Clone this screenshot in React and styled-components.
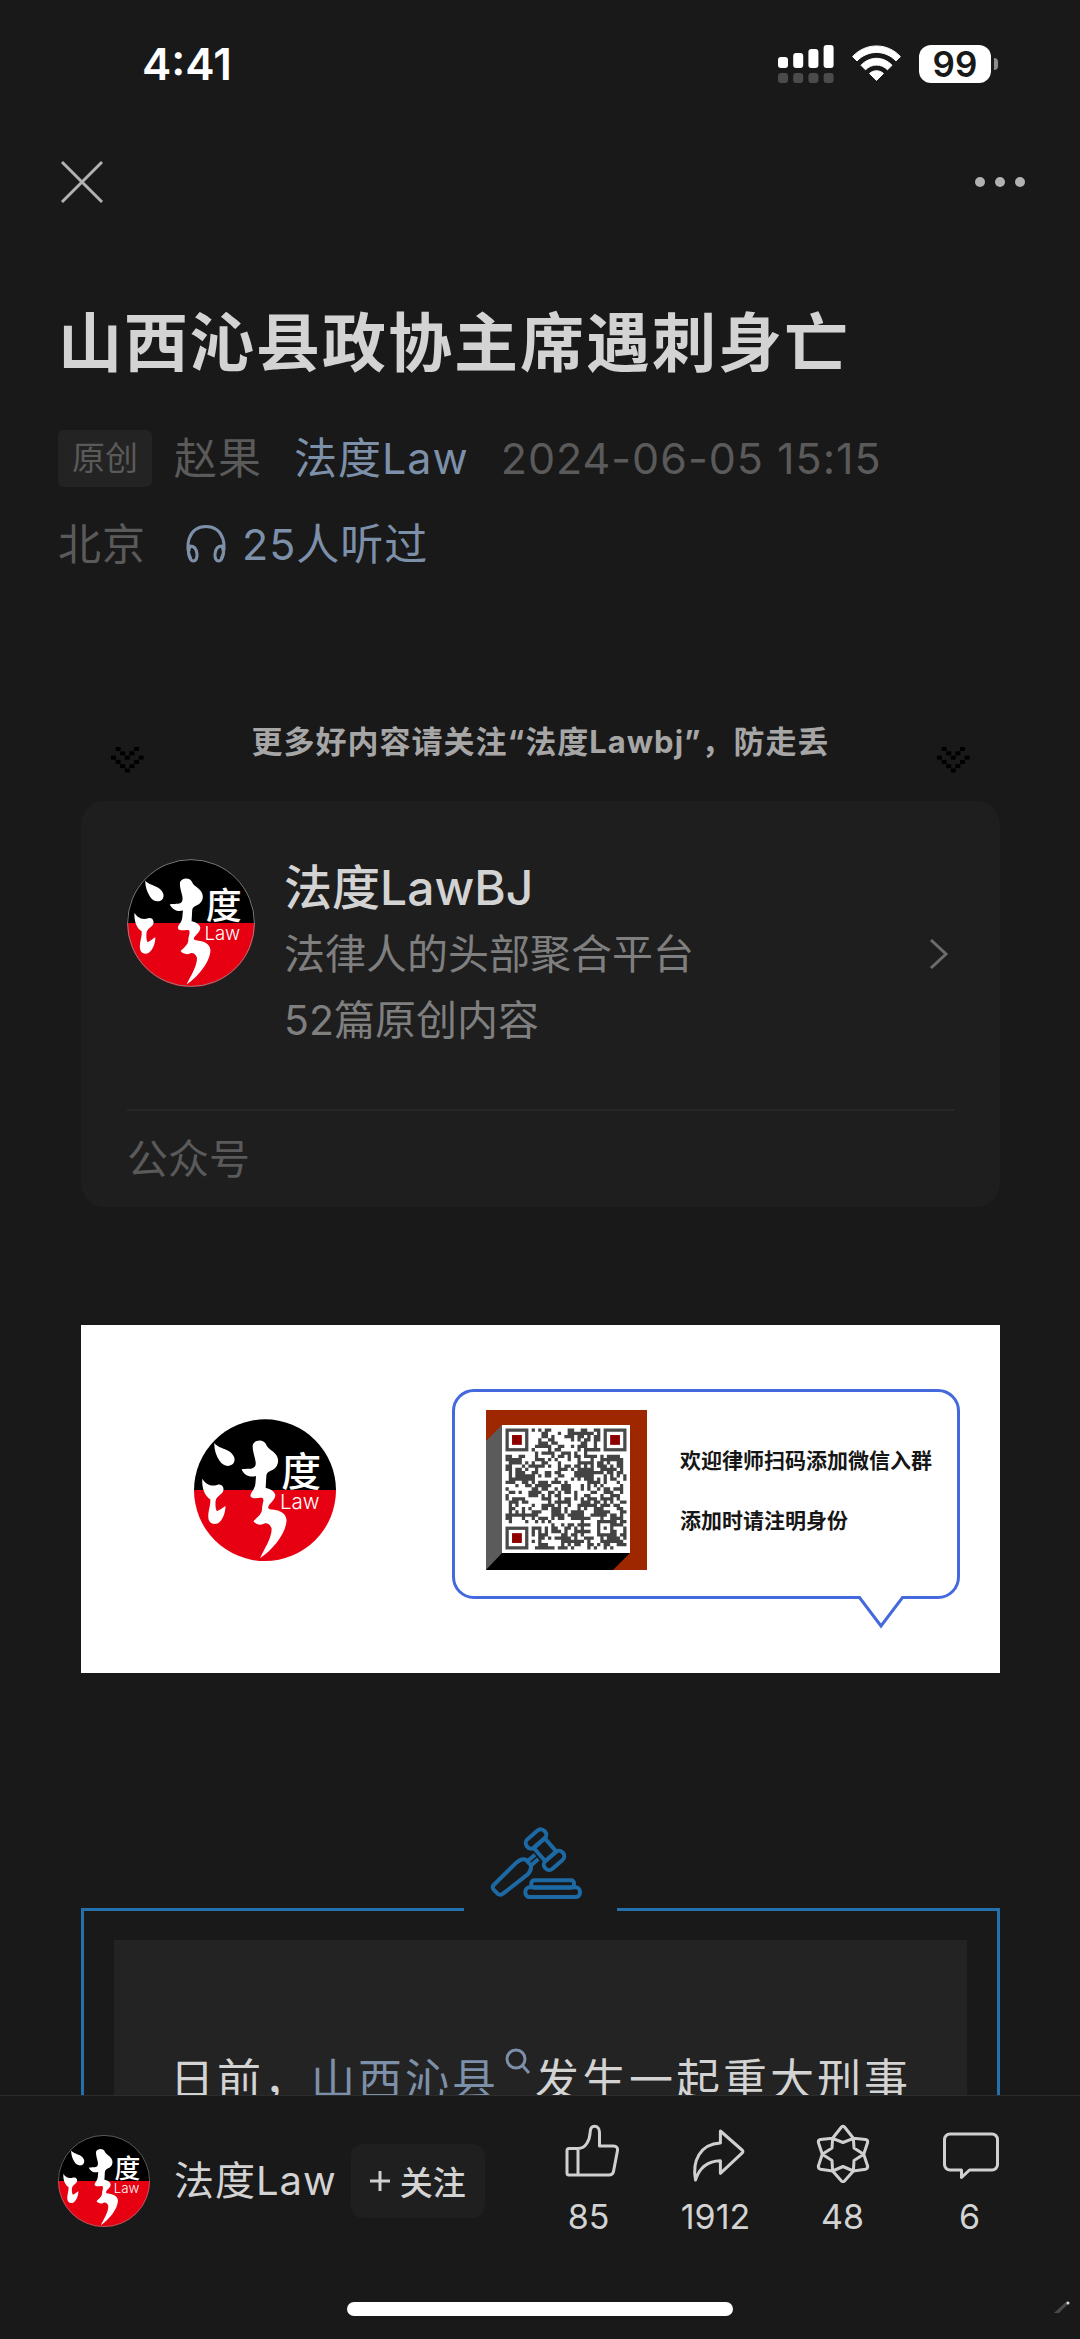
import React from "react";
import styled, { createGlobalStyle } from "styled-components";

const GlobalStyle = createGlobalStyle`
  * {
    box-sizing: border-box;
  }

  body {
    margin: 0;
    background: #191919;
    font-family: Inter, "Noto Sans CJK SC", sans-serif;
  }

  button {
    border: 0;
    padding: 0;
    background: none;
    color: inherit;
    font: inherit;
  }

  a {
    color: inherit;
    text-decoration: none;
  }

  svg {
    display: block;
    flex: none;
  }
`;

const Screen = styled.div`
  display: flex;
  flex-direction: column;
  height: 100vh;
  background: #191919;
  color: #d3d3d3;
`;

/* status bar */

const StatusBar = styled.header`
  display: flex;
  align-items: center;
  justify-content: space-between;
  height: 128px;
  padding: 0 82px 0 142px;
  color: #fff;
`;

const Clock = styled.time`
  font-size: 44px;
  font-weight: 600;
  line-height: 52px;
`;

const StatusIcons = styled.div`
  display: flex;
  align-items: center;
  gap: 18px;
`;

const Battery = styled.div`
  display: flex;
  align-items: center;
  gap: 3px;

  &::after {
    content: "";
    width: 4px;
    height: 12px;
    border-radius: 0 4px 4px 0;
    background: #8c8c8c;
  }
`;

const BatteryLevel = styled.span`
  width: 72px;
  border-radius: 12px;
  background: #fff;
  color: #191919;
  font-size: 35px;
  font-weight: 600;
  line-height: 38px;
  text-align: center;
`;

const NavBar = styled.nav`
  display: flex;
  align-items: center;
  justify-content: space-between;
  height: 108px;
  padding: 0 52px 0 58px;
  color: #b2b2b2;
`;

/* article */

const Scroller = styled.main`
  flex: 1;
  min-height: 0;
  overflow: hidden auto;
  scrollbar-width: none;
`;

const Heading = styled.div`
  padding: 65px 58px 0;
`;

const Title = styled.h1`
  margin: 0 0 30px;
  font-size: 64px;
  font-weight: 700;
  line-height: 84px;
  letter-spacing: 2px;
`;

const Meta = styled.div`
  display: flex;
  flex-wrap: wrap;
  align-items: center;
  max-width: 920px;
  color: #5a5a5a;
  font-size: 43px;
  line-height: 86px;
  letter-spacing: 1px;
  column-gap: 32px;
`;

const Author = styled.span`
  display: flex;
  align-items: center;
  gap: 22px;
`;

const Tag = styled.span`
  padding: 0 14px;
  border-radius: 6px;
  background: #232323;
  font-size: 33px;
  line-height: 57px;
  letter-spacing: 0;
`;

const MetaLink = styled.a`
  display: flex;
  align-items: center;
  gap: 16px;
  color: #7d90a9;
`;

const Place = styled.span`
  margin-right: 8px;
`;

const Content = styled.div`
  padding: 132px 80px 0 81px;
`;

const Notice = styled.div`
  display: flex;
  justify-content: space-between;
  height: 82px;
  padding: 0 30px;

  svg {
    margin-top: 28px;
  }
`;

const NoticeText = styled.strong`
  color: #a6a6a6;
  font-size: 31px;
  font-weight: 700;
  line-height: 46px;
  letter-spacing: 1px;
`;

const ProfileCard = styled.section`
  padding: 54px 46px 0;
  border-radius: 24px;
  background: #1e1e1e;
`;

const ProfileLink = styled.a`
  display: flex;
  align-items: center;
  padding-bottom: 56px;
  border-bottom: 2px solid #282828;
`;

const ProfileAvatar = styled.div`
  align-self: flex-start;
  padding-top: 4px;
`;

const ProfileText = styled.div`
  flex: 1;
  margin-left: 29px;
  color: #7f7f7f;
  font-size: 41px;
  line-height: 66px;
`;

const ProfileName = styled.div`
  color: #d3d3d3;
  font-size: 48px;
  font-weight: 500;
`;

const ProfileKind = styled.div`
  color: #5a5a5a;
  font-size: 41px;
  line-height: 96px;
`;

const Banner = styled.section`
  display: flex;
  align-items: flex-start;
  justify-content: space-between;
  margin-top: 118px;
  height: 348px;
  padding: 64px 40px 0 113px;
  background: #fff;
`;

const BannerLogo = styled.div`
  padding-top: 30px;
`;

const Bubble = styled.div`
  position: relative;
  display: flex;
  width: 508px;
  height: 210px;
  padding: 18px 0 0 31px;
  border: 3px solid #4468de;
  border-radius: 22px;
`;

const BubbleTail = styled.svg`
  position: absolute;
  right: 52px;
  bottom: -33px;
`;

const BubbleText = styled.p`
  margin: 21px 0 0 33px;
  color: #161616;
  font-size: 21px;
  font-weight: 700;
  line-height: 60px;
`;

const FrameTop = styled.div`
  display: flex;
  align-items: flex-end;
  margin-top: 148px;
`;

const FrameLine = styled.span`
  flex: 1;
  height: 3px;
  background: #2470ad;
`;

const GavelSlot = styled.span`
  display: flex;
  justify-content: center;
  width: 153px;
`;

const Frame = styled.div`
  padding: 29px 30px 0;
  border: solid #2470ad;
  border-width: 0 3px;
`;

const Passage = styled.p`
  margin: 0;
  padding: 102px 48px 104px 56px;
  background: #232323;
  font-size: 44px;
  line-height: 76px;
  letter-spacing: 3px;
`;

const TopicLink = styled.a`
  color: #7d90a9;

  svg {
    display: inline-block;
    margin: 0 4px 22px 6px;
    vertical-align: baseline;
  }
`;

/* bottom bar */

const BottomBar = styled.footer`
  position: relative;
  border-top: 1px solid #2c2c2c;
`;

const BarRow = styled.div`
  display: flex;
  align-items: center;
  padding: 22px 47px 0 58px;
`;

const AccountName = styled.a`
  margin: 0 14px 0 24px;
  font-size: 40px;
  line-height: 56px;
  letter-spacing: 1px;
`;

const FollowButton = styled.button`
  display: flex;
  align-items: center;
  justify-content: center;
  gap: 10px;
  width: 134px;
  height: 74px;
  border-radius: 12px;
  background: #1f1f1f;
  font-size: 33px;
  font-weight: 500;
`;

const Actions = styled.div`
  display: flex;
  margin-left: auto;
`;

const ActionButton = styled.button`
  display: flex;
  flex-direction: column;
  align-items: center;
  gap: 12px;
  width: 127px;
  padding: 5px 0;
  font-size: 34px;
  line-height: 44px;
`;

const HomeIndicator = styled.div`
  width: 386px;
  height: 14px;
  margin: 58px auto 23px;
  border-radius: 7px;
  background: #fff;
`;

const Glint = styled.svg`
  position: absolute;
  right: 10px;
  bottom: 24px;
`;

/* drawings */

const Logo = ({ size, ring }) => (
  <svg width={size} height={size} viewBox="341 326 428 428" role="img" aria-label="法度Law">
    <path d="M341 541a214 214 0 0 1 428 0Z" fill="#000" />
    <path d="M341 540a214 214 0 0 0 428 0Z" fill="#e60012" />
    {ring && <circle cx="555" cy="540" r="212" fill="none" stroke="#8a8a8a" strokeWidth="3" />}
    <g fill="#fff">
      <path d="M402 398C412 412 434 414 448 424C464 436 468 452 458 462C446 472 428 468 418 452C408 436 402 420 402 398Z" />
      <path d="M366 506C374 520 390 532 412 524C426 520 434 534 428 546C420 556 408 560 406 574C405 586 406 598 410 604C420 600 428 592 436 588C436 606 428 632 412 641C396 646 384 638 384 620C384 600 392 584 390 568C374 558 364 536 366 506Z" />
      <path d="M518 404C524 388 550 386 558 402C564 418 580 420 590 436C600 454 592 470 580 478C568 484 560 486 559 498L557 534C568 536 582 542 586 554C588 568 570 580 566 588C560 598 572 598 586 600C608 604 620 616 620 632C618 672 578 720 540 746C554 716 576 684 575 656C570 642 560 638 552 642C540 648 526 642 520 634C532 622 546 612 546 598C546 582 554 572 548 564C538 560 522 570 512 560C508 550 524 540 526 522L528 498C514 502 496 500 484 478C500 474 514 480 524 470C534 456 516 432 518 404Z" />
      <text x="604" y="527" fontSize="120" fontWeight="500">度</text>
      <text x="600" y="597" fontSize="62" fontWeight="300">Law</text>
    </g>
  </svg>
);

const Signal = () => (
  <svg width="56" height="38" viewBox="0 0 56 38">
    {[11, 15, 19, 23].map((h, i) => (
      <g key={h}>
        <rect x={i * 15.2} y={23 - h} width="10" height={h} rx="3" fill="#fff" />
        <rect x={i * 15.2} y="28" width="10" height="10" rx="3" fill="#4b4b4b" />
      </g>
    ))}
  </svg>
);

const Wifi = () => (
  <svg width="49" height="38" viewBox="0 0 49 38" fill="#fff" stroke="#fff" strokeLinejoin="round">
    <path d="M0.600 11.600C13.500-2.600 35.500-2.600 48.400 11.600L44 16C33.400 4.600 15.600 4.600 5 16Z" />
    <path d="M9 20.300C17.500 11 31.500 11 40 20.300L35.500 24.800C29.500 18.500 19.500 18.500 13.500 24.800Z" />
    <path d="M17.500 28.500C21.500 24.800 27.500 24.800 31.500 28.500L24.500 35.500Z" />
  </svg>
);

const DownMark = () => {
  const rows = [[1, 5], [2, 4], [0, 3, 6], [1, 5], [2, 4], [3]];
  return (
    <svg width="33" height="26" viewBox="0 0 33 26">
      {rows.map((cols, y) =>
        cols.map((x) => (
          <rect key={`${x}-${y}`} x={x * 4.6} y={y * 4.3} width="5" height="4" fill="#000" />
        ))
      )}
    </svg>
  );
};

const QR_SIZE = 37;

const inFinder = (x, y) =>
  (x < 8 && y < 8) || (x > QR_SIZE - 9 && y < 8) || (x < 8 && y > QR_SIZE - 9);

const inAlign = (x, y) => Math.abs(x - 30) < 3 && Math.abs(y - 30) < 3;

const qrPath = () => {
  let seed = 20240605;
  let d = "";
  for (let y = 0; y < QR_SIZE; y++) {
    for (let x = 0; x < QR_SIZE; x++) {
      seed = (seed * 1103515245 + 12345) % 2147483648;
      if (inFinder(x, y)) continue;
      const ring = Math.max(Math.abs(x - 30), Math.abs(y - 30));
      const on = inAlign(x, y) ? ring !== 1 : seed / 2147483648 < 0.5;
      if (on) d += `M${x} ${y}h1v1h-1z`;
    }
  }
  return d;
};

const QR_PATH = qrPath();

const QrCode = () => (
  <svg width="161" height="160" viewBox="0 0 161 160" role="img" aria-label="微信群二维码">
    <rect width="161" height="160" fill="#9f2700" />
    <path d="M0 31L16 15V144L0 160Z" fill="#5b5b5b" />
    <path d="M0 160L16 143H144L127 160Z" fill="#000" />
    <rect x="16" y="15" width="128" height="128" fill="#fff" />
    <g transform="translate(19.500 18.500) scale(3.27)">
      <path d={QR_PATH} fill="#444" />
      {[[0, 0], [30, 0], [0, 30]].map(([x, y]) => (
        <g key={`${x}-${y}`}>
          <rect x={x + 0.5} y={y + 0.5} width="6" height="6" fill="none" stroke="#4a4a4a" />
          <rect x={x + 2} y={y + 2} width="3" height="3" fill="#8e0000" />
        </g>
      ))}
    </g>
  </svg>
);

const Gavel = () => (
  <svg width="120" height="90" viewBox="0 0 360 270" fill="none" stroke="#1d69a3" strokeWidth="12">
    <g transform="rotate(-41 165 54)">
      <rect x="130" y="38" width="70" height="32" rx="15" />
    </g>
    <g transform="rotate(-41 192 86)">
      <rect x="170" y="59" width="44" height="54" />
    </g>
    <g transform="rotate(-41 219 118)">
      <rect x="184" y="102" width="70" height="32" rx="15" />
    </g>
    <path d="M139 121L162 101M149 134L172 114" />
    <path d="M38 192L106 125C116 116 128 114 134 116L149 132C152 142 148 152 140 160L66 218C58 224 52 222 46 214L38 206C34 200 34 196 38 192Z" strokeLinejoin="round" />
    <rect x="151" y="178" width="128" height="22" rx="9" />
    <rect x="133" y="199" width="164" height="29" rx="13" />
  </svg>
);

const icons = {
  like: (
    <path d="M19 25.500H10a2 2 0 0 0-2 2V50a2 2 0 0 0 2 2H50c2.500 0 4-1 4.500-3.500L58.400 28c.6-3-.8-5-4-5H40.500V9.500C40.500 5.500 38.500 3.300 35.500 3.300S31.400 5 31.200 9C30.800 17 27 25.500 19 25.500ZM19 25.500V52" />
  ),
  share: (
    <path d="M34.400 8L56 27q1.800 1.600 0 3.200L34.400 50.300V37.800C24 38 14 43 9.500 57C6 38 14 21 34.400 20Z" />
  ),
  flower: (
    <>
      <path d="M28.500 4Q30 2.500 31.500 4L40.400 15.300L52.500 16.500Q55 17 54.600 19.500L50.700 31.300L54.600 43Q55 45.500 52.500 46.200L40.400 48L31.500 58Q30 59.500 28.500 58L19.600 48L7.500 46.200Q5 45.500 5.400 43L9.300 31.300L5.400 19.500Q5 17 7.500 16.500L19.600 15.300Z" />
      <path d="M19.600 15.300L30 19.500L40.400 15.300L41 25L50.700 31.300L41 37.500L40.400 48L30 43.500L19.600 48L19 37.500L9.300 31.300L19 25Z" />
    </>
  ),
  comment: (
    <path d="M10 11H52a5.500 5.500 0 0 1 5.500 5.500V41.500a5.500 5.500 0 0 1-5.500 5.500H29.500L21.500 54.500V47H10a5.500 5.500 0 0 1-5.500-5.500V16.500A5.500 5.500 0 0 1 10 11Z" />
  ),
};

const Action = ({ icon, label, count }) => (
  <ActionButton type="button" aria-label={`${label} ${count}`}>
    <svg width="60" height="60" viewBox="0 0 60 60" fill="none" stroke="#d0d0d0" strokeWidth="3" strokeLinejoin="round">
      {icons[icon]}
    </svg>
    {count}
  </ActionButton>
);

export default function App() {
  return (
    <>
      <GlobalStyle />
      <Screen>
        <StatusBar>
          <Clock>4:41</Clock>
          <StatusIcons>
            <Signal />
            <Wifi />
            <Battery>
              <BatteryLevel>99</BatteryLevel>
            </Battery>
          </StatusIcons>
        </StatusBar>

        <NavBar>
          <button type="button" aria-label="关闭">
            <svg width="48" height="48" viewBox="0 0 48 48" stroke="#b2b2b2" strokeWidth="3">
              <path d="M4 4L44 44M44 4L4 44" />
            </svg>
          </button>
          <button type="button" aria-label="更多">
            <svg width="56" height="12" viewBox="0 0 56 12" fill="#b2b2b2">
              <circle cx="8" cy="6" r="5" />
              <circle cx="28" cy="6" r="5" />
              <circle cx="48" cy="6" r="5" />
            </svg>
          </button>
        </NavBar>

        <Scroller>
          <Heading>
            <Title>山西沁县政协主席遇刺身亡</Title>
            <Meta>
              <Author>
                <Tag>原创</Tag>
                赵果
              </Author>
              <MetaLink href="#account">法度Law</MetaLink>
              <time>2024-06-05 15:15</time>
              <Place>北京</Place>
              <MetaLink href="#listen">
                <svg width="40" height="40" viewBox="0 0 40 40" fill="none" stroke="#7d90a9" strokeWidth="3">
                  <path d="M5 35C1 29 1.500 20 3 15C6 6 12 2.500 20 2.500S34 6 37 15C38.500 20 39 29 35 35" />
                  <path d="M4 22C8 22 10.500 25 11 30C11.300 34 10 37 7.500 37C5 37 3 33 2.500 28ZM36 22C32 22 29.500 25 29 30C28.700 34 30 37 32.500 37C35 37 37 33 37.500 28Z" />
                </svg>
                25人听过
              </MetaLink>
            </Meta>
          </Heading>

          <Content>
            <Notice>
              <DownMark />
              <NoticeText>更多好内容请关注“法度Lawbj”，防走丢</NoticeText>
              <DownMark />
            </Notice>

            <ProfileCard>
              <ProfileLink href="#profile">
                <ProfileAvatar>
                  <Logo size={128} ring />
                </ProfileAvatar>
                <ProfileText>
                  <ProfileName>法度LawBJ</ProfileName>
                  <div>法律人的头部聚合平台</div>
                  <div>52篇原创内容</div>
                </ProfileText>
                <svg width="28" height="36" viewBox="0 0 28 36" fill="none" stroke="#6c6c6c" strokeWidth="3">
                  <path d="M5 4L20 18L5 32" />
                </svg>
              </ProfileLink>
              <ProfileKind>公众号</ProfileKind>
            </ProfileCard>

            <Banner>
              <BannerLogo>
                <Logo size={142} />
              </BannerLogo>
              <Bubble>
                <QrCode />
                <BubbleText>
                  欢迎律师扫码添加微信入群
                  <br />
                  添加时请注明身份
                </BubbleText>
                <BubbleTail width="48" height="34" viewBox="0 0 48 34">
                  <path d="M3 0H45V4L24 31L3 4Z" fill="#fff" />
                  <path d="M0 2.500H2.500L24 31L45.500 2.500H48" fill="none" stroke="#4468de" strokeWidth="3" />
                </BubbleTail>
              </Bubble>
            </Banner>

            <FrameTop>
              <FrameLine />
              <GavelSlot>
                <Gavel />
              </GavelSlot>
              <FrameLine />
            </FrameTop>
            <Frame>
              <Passage>
                日前，
                <TopicLink href="#topic">
                  山西沁县
                  <svg width="26" height="26" viewBox="0 0 26 26" fill="none" stroke="#7d90a9" strokeWidth="3">
                    <circle cx="11" cy="11" r="9" />
                    <path d="M17 17L24 25" />
                  </svg>
                </TopicLink>
                发生一起重大刑事
              </Passage>
            </Frame>
          </Content>
        </Scroller>

        <BottomBar>
          <BarRow>
            <Logo size={92} ring />
            <AccountName href="#account">法度Law</AccountName>
            <FollowButton type="button">
              <svg width="20" height="20" viewBox="0 0 20 20" stroke="#d0d0d0" strokeWidth="3">
                <path d="M10 0V20M0 10H20" />
              </svg>
              关注
            </FollowButton>
            <Actions>
              <Action icon="like" label="赞" count={85} />
              <Action icon="share" label="分享" count={1912} />
              <Action icon="flower" label="推荐" count={48} />
              <Action icon="comment" label="留言" count={6} />
            </Actions>
          </BarRow>
          <HomeIndicator />
          <Glint width="16" height="14" viewBox="0 0 16 14">
            <path d="M0 12L13 0L15 2L5 12Z" fill="#4a4a4a" />
            <circle cx="14" cy="2" r="1.500" fill="#ddd" />
          </Glint>
        </BottomBar>
      </Screen>
    </>
  );
}
